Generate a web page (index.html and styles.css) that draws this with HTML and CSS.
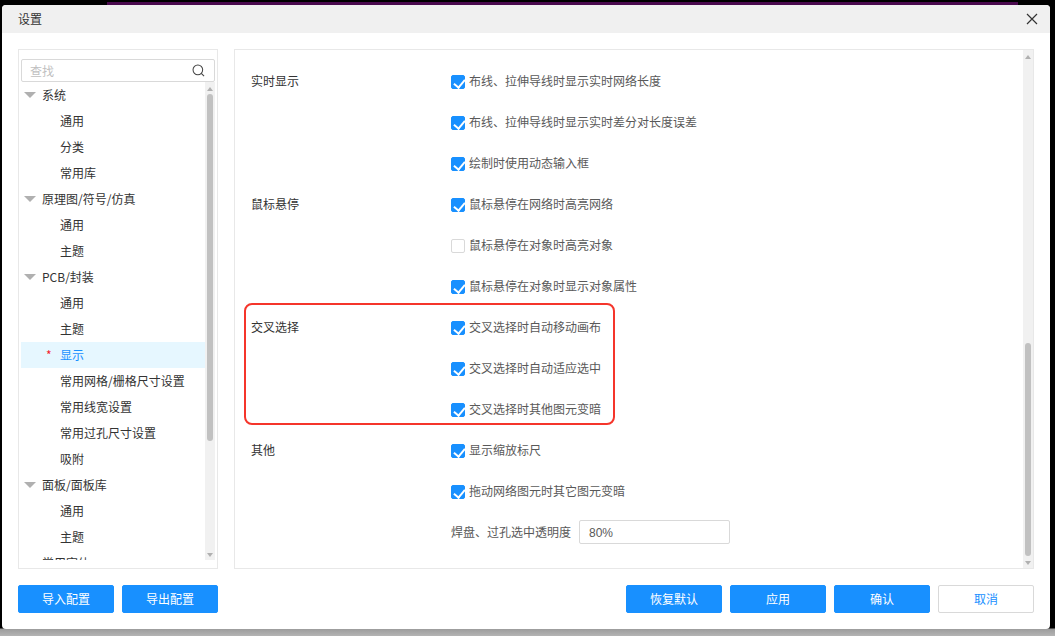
FILE: index.html
```html
<!DOCTYPE html>
<html lang="zh">
<head>
<meta charset="utf-8">
<title>设置</title>
<link rel="stylesheet" href="styles.css">
</head>
<body>
<div class="backdrop-bar"></div>
<div class="dialog">
  <div class="dialog-head">
    <span>设置</span>
    <svg class="close" width="12" height="12" viewBox="0 0 12 12"><path d="M1 1l10 10M11 1L1 11" stroke="#333" stroke-width="1.2" fill="none"/></svg>
  </div>
  <div class="dialog-body">
    <div class="side">
      <div class="search">
        <span class="search-ph">查找</span>
        <svg width="14" height="14" viewBox="0 0 14 14"><circle cx="6.3" cy="6.3" r="5.2" stroke="#444" stroke-width="1.1" fill="none"/><path d="M10 10l3 3" stroke="#444" stroke-width="1.2"/></svg>
      </div>
      <div class="tree-wrap">
        <div class="tree">
          <div class="node"><i class="caret"></i>系统</div>
          <div class="leaf">通用</div>
          <div class="leaf">分类</div>
          <div class="leaf">常用库</div>
          <div class="node"><i class="caret"></i>原理图/符号/仿真</div>
          <div class="leaf">通用</div>
          <div class="leaf">主题</div>
          <div class="node"><i class="caret"></i>PCB/封装</div>
          <div class="leaf">通用</div>
          <div class="leaf">主题</div>
          <div class="leaf active"><b class="star">*</b>显示</div>
          <div class="leaf">常用网格/栅格尺寸设置</div>
          <div class="leaf">常用线宽设置</div>
          <div class="leaf">常用过孔尺寸设置</div>
          <div class="leaf">吸附</div>
          <div class="node"><i class="caret"></i>面板/面板库</div>
          <div class="leaf">通用</div>
          <div class="leaf">主题</div>
          <div class="node plain">常用字体</div>
        </div>
        <div class="scroll">
          <i class="arr up"></i>
          <div class="track"><div class="thumb thumb-tree"></div></div>
          <i class="arr down"></i>
        </div>
      </div>
    </div>
    <div class="main">
      <div class="content">
        <div class="group">
          <div class="g-label">实时显示</div>
          <div class="g-items">
            <label class="row"><i class="cb on"></i>布线、拉伸导线时显示实时网络长度</label>
            <label class="row"><i class="cb on"></i>布线、拉伸导线时显示实时差分对长度误差</label>
            <label class="row"><i class="cb on"></i>绘制时使用动态输入框</label>
          </div>
        </div>
        <div class="group">
          <div class="g-label">鼠标悬停</div>
          <div class="g-items">
            <label class="row"><i class="cb on"></i>鼠标悬停在网络时高亮网络</label>
            <label class="row"><i class="cb"></i>鼠标悬停在对象时高亮对象</label>
            <label class="row"><i class="cb on"></i>鼠标悬停在对象时显示对象属性</label>
          </div>
        </div>
        <div class="group">
          <div class="g-label">交叉选择</div>
          <div class="g-items">
            <label class="row"><i class="cb on"></i>交叉选择时自动移动画布</label>
            <label class="row"><i class="cb on"></i>交叉选择时自动适应选中</label>
            <label class="row"><i class="cb on"></i>交叉选择时其他图元变暗</label>
          </div>
        </div>
        <div class="group">
          <div class="g-label">其他</div>
          <div class="g-items">
            <label class="row"><i class="cb on"></i>显示缩放标尺</label>
            <label class="row"><i class="cb on"></i>拖动网络图元时其它图元变暗</label>
            <div class="row field"><span class="field-label">焊盘、过孔选中透明度</span><span class="input">80%</span></div>
          </div>
        </div>
        <div class="highlight"></div>
      </div>
      <div class="scroll main-scroll">
        <i class="arr up"></i>
        <div class="track"><div class="thumb thumb-main"></div></div>
        <i class="arr down"></i>
      </div>
    </div>
  </div>
  <div class="dialog-foot">
    <div class="btns">
      <button class="btn">导入配置</button>
      <button class="btn">导出配置</button>
    </div>
    <div class="btns">
      <button class="btn">恢复默认</button>
      <button class="btn">应用</button>
      <button class="btn">确认</button>
      <button class="btn ghost">取消</button>
    </div>
  </div>
</div>
<div class="watermarks">
  <div class="wm">ZouYuXuan<br>2026-01-06 15:51:47</div>
  <div class="wm">ZouYuXuan<br>2026-01-06 15:51:47</div>
  <div class="wm">ZouYuXuan<br>2026-01-06 15:51:47</div>
  <div class="wm">ZouYuXuan<br>2026-01-06 15:51:47</div>
  <div class="wm">ZouYuXuan<br>2026-01-06 15:51:47</div>
  <div class="wm">ZouYuXuan<br>2026-01-06 15:51:47</div>
  <div class="wm">ZouYuXuan<br>2026-01-06 15:51:47</div>
  <div class="wm">ZouYuXuan<br>2026-01-06 15:51:47</div>
</div>
</body>
</html>
```

FILE: styles.css
```css
* { box-sizing: border-box; }
html, body { margin: 0; height: 100%; }
body {
  position: relative;
  width: 1055px;
  height: 636px;
  overflow: hidden;
  background: linear-gradient(#000 0, #000 628px, #9c9c9c 629px, #b4b4b4 636px);
  font: 12px/1.5 "Noto Sans CJK SC", "Liberation Sans", sans-serif;
  color: #333;
  padding: 5px 5px 7px 2px;
}
.backdrop-bar {
  position: absolute;
  left: 107px;
  top: 2px;
  width: 911px;
  height: 3px;
  background: #4a0a4e;
}
.dialog {
  position: relative;
  height: 624px;
  background: #fff;
  border-radius: 4px;
  display: flex;
  flex-direction: column;
}
.dialog-head {
  height: 28px;
  flex: none;
  background: #f0f0f0;
  border-radius: 4px 4px 0 0;
  display: flex;
  align-items: center;
  justify-content: space-between;
  padding: 0 12px 0 16px;
}
.close { display: block; }
.dialog-body {
  flex: none;
  height: 520px;
  margin-top: 16px;
  padding: 0 16px;
  display: flex;
  gap: 16px;
}
.side {
  width: 200px;
  flex: none;
  border: 1px solid #e8e8e8;
  padding: 9px 2px 8px 2px;
  display: flex;
  flex-direction: column;
}
.search {
  height: 23px;
  flex: none;
  border: 1px solid #d9d9d9;
  border-radius: 2px;
  display: flex;
  align-items: center;
  justify-content: space-between;
  padding: 0 9px 0 8px;
}
.search svg { width: 13px; height: 13px; }
.search-ph { color: #bfbfbf; }
.tree-wrap {
  flex: 1;
  min-height: 0;
  display: flex;
  overflow: hidden;
}
.tree { flex: 1; min-width: 0; overflow: hidden; }
.node, .leaf {
  height: 26px;
  line-height: 26px;
  white-space: nowrap;
}
.node { display: flex; align-items: center; padding-left: 3px; }
.node.plain { padding-left: 21px; }
.caret {
  width: 0;
  height: 0;
  margin-right: 6px;
  border-left: 6px solid transparent;
  border-right: 6px solid transparent;
  border-top: 6px solid #b0b0b0;
}
.leaf { position: relative; padding-left: 39px; }
.leaf.active { background: #e6f7ff; color: #1890ff; }
.star {
  position: absolute;
  left: 25px;
  color: #f5222d;
  font-weight: 400;
}
.scroll {
  flex: none;
  width: 10px;
  display: flex;
  flex-direction: column;
  align-items: center;
  background: #f1f1f1;
}
.track { flex: 1; width: 100%; position: relative; min-height: 0; }
.thumb {
  position: absolute;
  left: 2px;
  right: 2px;
  background: #c1c1c1;
  border-radius: 3px;
}
.thumb-tree { top: 0; height: 347px; }
.thumb-main { top: 281px; height: 213px; }
.arr { flex: none; width: 0; height: 0; border-left: 3px solid transparent; border-right: 3px solid transparent; }
.arr.up { margin: 5px 0 3px; border-bottom: 4px solid #b0b0b0; }
.arr.down { margin: 3px 0 3px; border-top: 4px solid #b0b0b0; }
.main {
  flex: 1;
  min-width: 0;
  border: 1px solid #e8e8e8;
  display: flex;
}
.content {
  position: relative;
  flex: 1;
  min-width: 0;
  padding: 22px 16px 0;
}
.group { display: flex; }
.g-label { width: 200px; flex: none; line-height: 18px; }
.g-items { flex: 1; display: flex; flex-direction: column; }
.row {
  height: 41px;
  display: flex;
  align-items: flex-start;
  line-height: 18px;
  color: #595959;
}
.cb {
  width: 14px;
  height: 14px;
  flex: none;
  margin: 3px 4px 0 0;
  border: 1px solid #d9d9d9;
  border-radius: 2px;
  background: #fff;
  position: relative;
}
.cb.on { background: #1890ff; border-color: #1890ff; }
.cb.on::after {
  content: "";
  position: absolute;
  left: 3.5px;
  top: 0.5px;
  width: 5px;
  height: 9px;
  border: solid #fff;
  border-width: 0 2px 2px 0;
  transform: rotate(40deg);
}
.field { align-items: center; height: 24px; margin-top: -3px; }
.field-label { width: 128px; flex: none; }
.input {
  width: 151px;
  height: 24px;
  border: 1px solid #d9d9d9;
  border-radius: 2px;
  padding: 0 9px;
  line-height: 24px;
  font-family: "Liberation Sans", sans-serif;
  font-size: 12px;
}
.highlight {
  position: absolute;
  left: 9px;
  top: 253px;
  width: 371px;
  height: 122px;
  border: 2px solid #f5352b;
  border-radius: 8px;
}
.dialog-foot {
  flex: none;
  margin-top: 16px;
  padding: 0 16px;
  display: flex;
  justify-content: space-between;
}
.btns { display: flex; gap: 8px; }
.btn {
  width: 96px;
  height: 28px;
  padding: 0;
  border: 1px solid #1890ff;
  border-radius: 2px;
  background: #1890ff;
  color: #fff;
  font: inherit;
}
.btn.ghost { background: #fff; border-color: #d9d9d9; color: #1890ff; }
.watermarks {
  position: absolute;
  left: -197px;
  top: -14px;
  display: grid;
  grid-template-columns: repeat(4, 320px);
  grid-template-rows: repeat(2, 310px);
  pointer-events: none;
}
.wm {
  align-self: center;
  justify-self: center;
  transform: rotate(-45deg);
  font: 16px/22px "Open Sans", "Liberation Sans", sans-serif;
  color: rgba(0, 0, 0, 0.025);
  white-space: nowrap;
}
```
